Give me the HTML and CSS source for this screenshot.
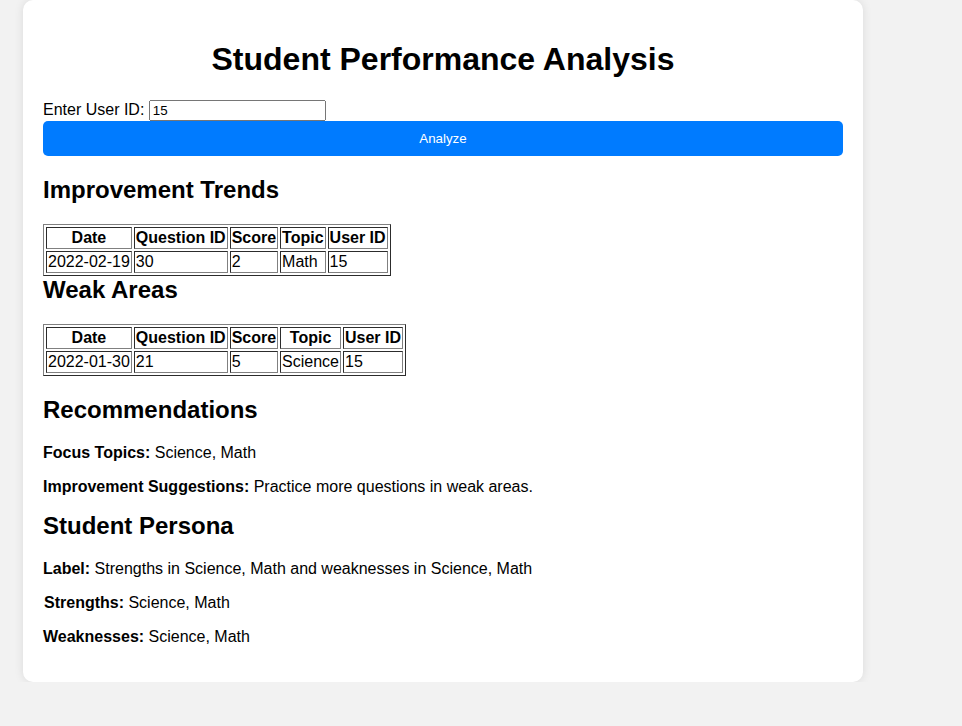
FILE: index.html
```html
<!DOCTYPE html>
<html>
<head>
<meta charset="utf-8">
<title>Student Performance Analysis</title>
<link rel="stylesheet" href="styles.css">
</head>
<body>
<div class="container">
  <h1>Student Performance Analysis</h1>
  <label for="userId">Enter User ID:</label>
  <input type="text" id="userId" class="user-input" value="15">
  <button class="analyze">Analyze</button>

  <h2>Improvement Trends</h2>
  <table border="1">
    <tr><th>Date</th><th>Question ID</th><th>Score</th><th>Topic</th><th>User ID</th></tr>
    <tr><td>2022-02-19</td><td>30</td><td>2</td><td>Math</td><td>15</td></tr>
  </table>

  <h2 class="weak">Weak Areas</h2>
  <table border="1">
    <tr><th>Date</th><th>Question ID</th><th>Score</th><th>Topic</th><th>User ID</th></tr>
    <tr><td>2022-01-30</td><td>21</td><td>5</td><td>Science</td><td>15</td></tr>
  </table>

  <h2 class="recs">Recommendations</h2>
  <p><strong>Focus Topics:</strong> Science, Math</p>
  <p><strong>Improvement Suggestions:</strong> Practice more questions in weak areas.</p>

  <h2 class="persona">Student Persona</h2>
  <p><strong>Label:</strong> Strengths in Science, Math and weaknesses in Science, Math</p>
  <p class="indent"><strong>Strengths:</strong> Science, Math</p>
  <p><strong>Weaknesses:</strong> Science, Math</p>
</div>
</body>
</html>
```

FILE: styles.css
```css
html, body {
  margin: 0;
  background: #f2f2f2;
}
body {
  font-family: "Liberation Sans", Arial, sans-serif;
  padding: 0 23px;
}
.container {
  width: 800px;
  padding: 20px;
  background: #fff;
  border-radius: 10px;
  box-shadow: 0 0 10px rgba(0, 0, 0, 0.1);
}
h1 {
  text-align: center;
  font-size: 32px;
}
h2 {
  font-size: 24px;
  margin: 19.92px 0;
}
h2.weak {
  margin-top: 0;
}
h2.recs {
  margin-bottom: 20.92px;
}
h2.persona {
  margin-top: 16px;
}
.user-input {
  width: 169px;
  font-family: "Liberation Sans", Arial, sans-serif;
  font-size: 13.33px;
}
.analyze {
  display: block;
  width: 100%;
  padding: 10px;
  border: none;
  border-radius: 5px;
  background: #007bff;
  color: #fff;
  font-family: "Liberation Sans", Arial, sans-serif;
  font-size: 13.33px;
}
.indent {
  padding-left: 1px;
}
```
